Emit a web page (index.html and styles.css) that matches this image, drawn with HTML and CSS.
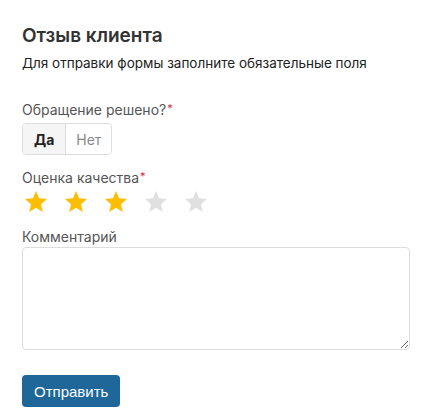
FILE: index.html
```html
<!DOCTYPE html>
<html lang="ru">
<head>
<meta charset="utf-8">
<link rel="stylesheet" href="styles.css">
</head>
<body>
<form class="form">
  <h1 class="title">Отзыв клиента</h1>
  <p class="subtitle">Для отправки формы заполните обязательные поля</p>

  <div class="label label-first">Обращение решено?<span class="req">*</span></div>
  <div class="segmented">
    <button type="button" class="seg seg-active">Да</button>
    <button type="button" class="seg">Нет</button>
  </div>

  <div class="label label-rating">Оценка качества<span class="req">*</span></div>
  <div class="stars">
    <svg class="star on" viewBox="2 2 20 20"><path d="M12 17.27L18.18 21l-1.64-7.03L22 9.24l-7.19-.61L12 2 9.19 8.63 2 9.24l5.46 4.73L5.82 21z"/></svg>
    <svg class="star on" viewBox="2 2 20 20"><path d="M12 17.27L18.18 21l-1.64-7.03L22 9.24l-7.19-.61L12 2 9.19 8.63 2 9.24l5.46 4.73L5.82 21z"/></svg>
    <svg class="star on" viewBox="2 2 20 20"><path d="M12 17.27L18.18 21l-1.64-7.03L22 9.24l-7.19-.61L12 2 9.19 8.63 2 9.24l5.46 4.73L5.82 21z"/></svg>
    <svg class="star" viewBox="2 2 20 20"><path d="M12 17.27L18.18 21l-1.64-7.03L22 9.24l-7.19-.61L12 2 9.19 8.63 2 9.24l5.46 4.73L5.82 21z"/></svg>
    <svg class="star" viewBox="2 2 20 20"><path d="M12 17.27L18.18 21l-1.64-7.03L22 9.24l-7.19-.61L12 2 9.19 8.63 2 9.24l5.46 4.73L5.82 21z"/></svg>
  </div>

  <div class="label label-comment">Комментарий</div>
  <textarea class="comment"></textarea>

  <button type="button" class="submit">Отправить</button>
</form>
</body>
</html>
```

FILE: styles.css
```css
html, body {
  margin: 0;
  padding: 0;
  background: #fff;
}

body {
  font-family: Inter, "Noto Sans", sans-serif;
  color: #222;
}

.form {
  display: flex;
  flex-direction: column;
  align-items: flex-start;
  padding: 24px 16px 0 22px;
}

.title {
  margin: 0;
  font-size: 19px;
  line-height: 24px;
  font-weight: 600;
  color: #333;
}

.subtitle {
  margin: 5px 0 0;
  font-size: 13.5px;
  line-height: 20px;
  color: #222;
}

.label {
  font-size: 14px;
  line-height: 20px;
  color: #555;
}

.req {
  color: #d9263c;
  font-size: 11px;
  vertical-align: 3px;
  margin-left: 1px;
}

.label-first {
  margin-top: 25px;
}

.segmented {
  display: flex;
  margin-top: 3px;
  border: 1px solid #ddd;
  border-radius: 4px;
  overflow: hidden;
}

.seg {
  height: 30px;
  border: 0;
  background: #fff;
  font-family: Inter, "Noto Sans", sans-serif;
  font-size: 14px;
  color: #888;
  padding: 0 10px;
  margin: 0;
}

.seg-active {
  background: #f5f5f5;
  color: #222;
  font-weight: 700;
  border-right: 1px solid #ddd;
  padding: 0 11px;
}

.label-rating {
  margin-top: 11px;
}

.stars {
  display: flex;
  gap: 18px;
  margin-top: 3px;
  padding-left: 3px;
}

.star {
  width: 22px;
  height: 22px;
  fill: #e0e0e0;
}

.star.on {
  fill: #fdbe00;
}

.label-comment {
  margin-top: 14px;
}

.comment {
  box-sizing: border-box;
  width: 388px;
  height: 103px;
  margin: 0;
  border: 1px solid #ddd;
  border-radius: 4px;
  font-family: Inter, sans-serif;
  font-size: 14px;
  padding: 6px 8px;
}

.submit {
  margin-top: 25px;
  height: 32px;
  padding: 0 12px;
  border: 0;
  border-radius: 4px;
  background: #1f6699;
  color: #fff;
  font-family: "Liberation Sans", Arial, sans-serif;
  font-size: 15px;
}
```
